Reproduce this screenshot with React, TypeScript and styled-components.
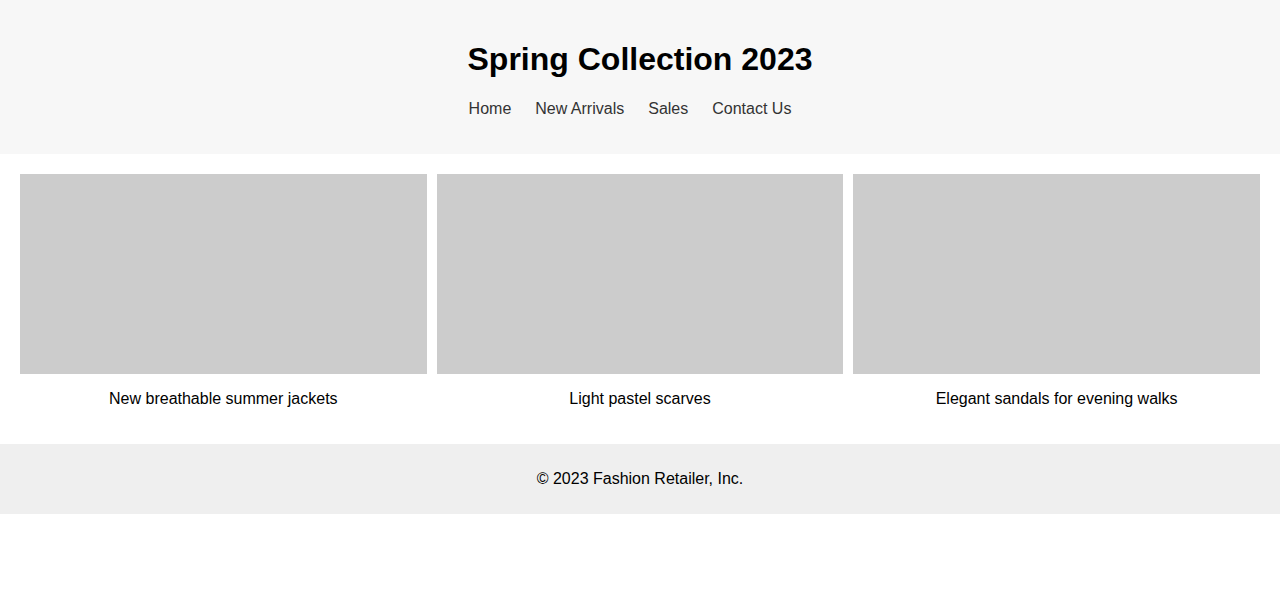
import React from "react";
import styled, { createGlobalStyle } from "styled-components";

const GlobalStyle = createGlobalStyle`
  html, body { margin: 0; padding: 0; background: #fff; }
  body { font-family: "Liberation Sans", Arial, sans-serif; color: #000; font-size: 16px; }
`;

const Header = styled.header`
  background: #f7f7f7;
  padding: 20px;
  text-align: center;
`;

const Title = styled.h1`
  font-size: 32px;
  font-weight: bold;
  margin: 21.44px 0;
`;

const NavList = styled.ul`
  list-style: none;
  margin: 16px 0;
  padding: 0;
  display: flex;
  justify-content: center;
  gap: 4px;
`;

const NavItem = styled.li`
  margin-right: 20px;
`;

const NavLink = styled.a`
  color: #333;
  text-decoration: none;
`;

const Main = styled.main`
  padding: 20px;
  display: grid;
  grid-template-columns: repeat(3, 1fr);
  gap: 10px;
`;

const Card = styled.div`
  text-align: center;
`;

const Picture = styled.div`
  height: 200px;
  background: #ccc;
`;

const Caption = styled.p`
  margin: 16px 0;
`;

const Footer = styled.footer`
  background: #efefef;
  padding: 10px;
  text-align: center;
`;

const FooterText = styled.p`
  margin: 16px 0;
`;

const links = ["Home", "New Arrivals", "Sales", "Contact Us"];
const items = [
  "New breathable summer jackets",
  "Light pastel scarves",
  "Elegant sandals for evening walks",
];

export default function App() {
  return (
    <>
      <GlobalStyle />
      <Header>
        <Title>Spring Collection 2023</Title>
        <nav>
          <NavList>
            {links.map((l) => (
              <NavItem key={l}>
                <NavLink href="#">{l}</NavLink>
              </NavItem>
            ))}
          </NavList>
        </nav>
      </Header>
      <Main>
        {items.map((t) => (
          <Card key={t}>
            <Picture />
            <Caption>{t}</Caption>
          </Card>
        ))}
      </Main>
      <Footer>
        <FooterText>© 2023 Fashion Retailer, Inc.</FooterText>
      </Footer>
    </>
  );
}
